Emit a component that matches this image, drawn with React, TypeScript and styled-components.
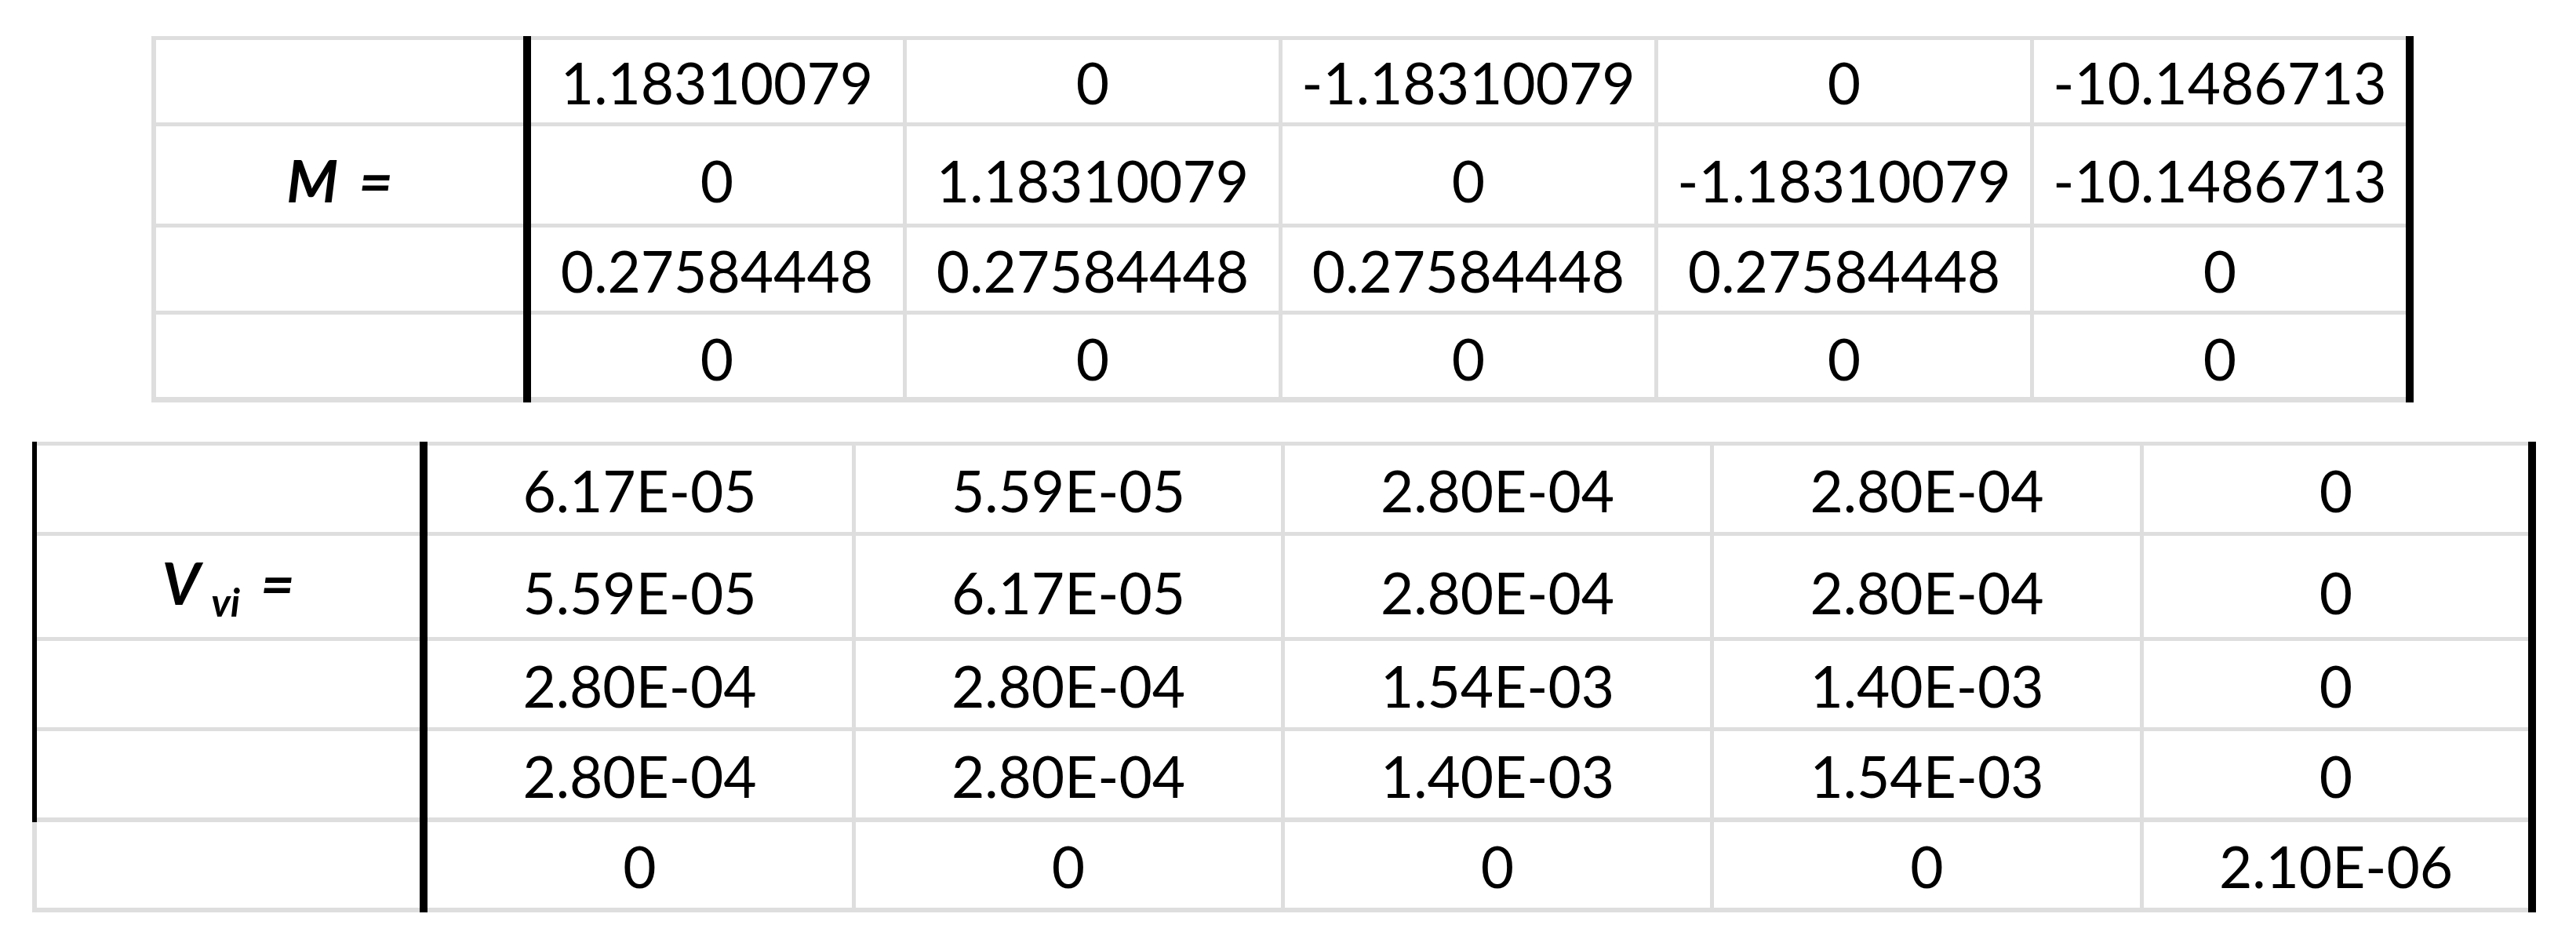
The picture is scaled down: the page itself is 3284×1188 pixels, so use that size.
import styled, { createGlobalStyle } from "styled-components";

const GlobalStyle = createGlobalStyle`
  body {
    margin: 0;
    background: #fff;
  }
`;

const Page = styled.div`
  display: flex;
  flex-direction: column;
  align-items: flex-start;
  gap: 50px;
  padding-top: 46px;
  font-family: "Lato", "Open Sans", sans-serif;
  color: #000;
`;

const Sheet = styled.div<{ $cols: string; $rows: string; $offset: number }>`
  display: grid;
  grid-template-columns: ${(p) => p.$cols};
  grid-template-rows: ${(p) => p.$rows};
  margin-left: ${(p) => p.$offset}px;
  background: #dedede;
`;

const Cell = styled.div<{ $r: number; $c: number; $pad: number }>`
  grid-row: ${(p) => p.$r};
  grid-column: ${(p) => p.$c};
  display: flex;
  align-items: flex-end;
  justify-content: center;
  padding-bottom: ${(p) => p.$pad}px;
  background: #fff;
  font-size: 73px;
  line-height: 1;
  font-variant-numeric: tabular-nums;
  white-space: nowrap;
`;

const Rule = styled.div<{ $c: number; $to: number }>`
  grid-column: ${(p) => p.$c};
  grid-row: 1 / ${(p) => p.$to};
  background: #000;
`;

const Label = styled.span`
  font-size: 75px;
  font-weight: 700;
  font-style: italic;
  line-height: 1;
`;

const Sub = styled.sub`
  font-size: 50px;
  vertical-align: -15px;
  margin-left: 14px;
`;

const Eq = styled.span`
  margin-left: 26px;
`;

type Row = { h: number; pad: number };

type MatrixProps = {
  offset: number;
  leftLine: number;
  leftRuleRows: number;
  labelWidth: number;
  colWidths: number[];
  rows: Row[];
  lines: number[];
  labelRow: number;
  label: React.ReactNode;
  data: string[][];
};

function Matrix({
  offset,
  leftLine,
  leftRuleRows,
  labelWidth,
  colWidths,
  rows,
  lines,
  labelRow,
  label,
  data,
}: MatrixProps) {
  const cols = [
    `${leftLine}px`,
    `${labelWidth}px`,
    "10px",
    colWidths.map((w) => `${w}px`).join(" 5px "),
    "10px",
  ].join(" ");
  const rowTemplate = rows
    .map((r, i) => `${lines[i]}px ${r.h}px`)
    .concat(`${lines[rows.length]}px`)
    .join(" ");
  const lastCol = 4 + colWidths.length * 2 - 1;

  return (
    <Sheet $cols={cols} $rows={rowTemplate} $offset={offset}>
      {rows.map((r, i) => (
        <Cell key={`l${i}`} $r={2 + i * 2} $c={2} $pad={r.pad}>
          {i === labelRow ? label : null}
        </Cell>
      ))}
      {data.map((row, i) =>
        row.map((v, j) => (
          <Cell key={`${i}-${j}`} $r={2 + i * 2} $c={4 + j * 2} $pad={rows[i].pad}>
            {v}
          </Cell>
        ))
      )}
      {leftRuleRows > 0 && <Rule $c={1} $to={leftRuleRows * 2 + 2} />}
      <Rule $c={3} $to={-1} />
      <Rule $c={lastCol} $to={-1} />
    </Sheet>
  );
}

const mData = [
  ["1.18310079", "0", "-1.18310079", "0", "-10.1486713"],
  ["0", "1.18310079", "0", "-1.18310079", "-10.1486713"],
  ["0.27584448", "0.27584448", "0.27584448", "0.27584448", "0"],
  ["0", "0", "0", "0", "0"],
];

const vData = [
  ["6.17E-05", "5.59E-05", "2.80E-04", "2.80E-04", "0"],
  ["5.59E-05", "6.17E-05", "2.80E-04", "2.80E-04", "0"],
  ["2.80E-04", "2.80E-04", "1.54E-03", "1.40E-03", "0"],
  ["2.80E-04", "2.80E-04", "1.40E-03", "1.54E-03", "0"],
  ["0", "0", "0", "0", "2.10E-06"],
];

export default function App() {
  return (
    <>
      <GlobalStyle />
      <Page>
        <Matrix
          offset={193}
          leftLine={6}
          leftRuleRows={0}
          labelWidth={468}
          colWidths={[474, 474, 474, 474, 474]}
          rows={[
            { h: 105, pad: 14 },
            { h: 124, pad: 18 },
            { h: 106, pad: 14 },
            { h: 105, pad: 12 },
          ]}
          lines={[5, 5, 5, 5, 7]}
          labelRow={1}
          label={
            <Label>
              M<Eq>=</Eq>
            </Label>
          }
          data={mData}
        />
        <Matrix
          offset={41}
          leftLine={6}
          leftRuleRows={4}
          labelWidth={488}
          colWidths={[541, 542, 542, 543, 490]}
          rows={[
            { h: 110, pad: 16 },
            { h: 129, pad: 20 },
            { h: 110, pad: 16 },
            { h: 110, pad: 16 },
            { h: 109, pad: 16 },
          ]}
          lines={[5, 5, 5, 5, 6, 6]}
          labelRow={1}
          label={
            <Label>
              V<Sub>vi</Sub>
              <Eq>=</Eq>
            </Label>
          }
          data={vData}
        />
      </Page>
    </>
  );
}
